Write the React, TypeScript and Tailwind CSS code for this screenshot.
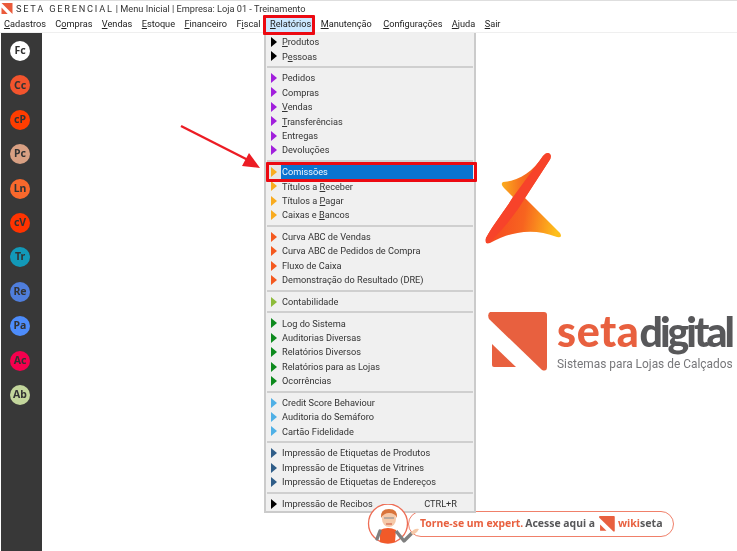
import { Fragment } from "react";

type MenuItem = { label: string; shortcut?: string; active?: boolean };
type MenuGroup = { color: string; items: MenuItem[] };

const topMenu = ["&Cadastros", "C&ompras", "&Vendas", "&Estoque", "&Financeiro", "F&iscal", "&Relatórios", "&Manutenção", "&Configurações", "&Ajuda", "&Sair"];

const shortcuts = [
  { label: "Fc", color: "bg-white" },
  { label: "Cc", color: "bg-[#f2542d]" },
  { label: "cP", color: "bg-[#ff3d00]" },
  { label: "Pc", color: "bg-[#d8a083]" },
  { label: "Ln", color: "bg-[#f9682c]" },
  { label: "cV", color: "bg-[#ff3300]" },
  { label: "Tr", color: "bg-[#1299b8]" },
  { label: "Re", color: "bg-[#4f7edc]" },
  { label: "Pa", color: "bg-[#4d8cfb]" },
  { label: "Ac", color: "bg-[#f5004e]" },
  { label: "Ab", color: "bg-[#c3d69c]" },
];

const menuGroups: MenuGroup[] = [
  { color: "#000000", items: [{ label: "&Produtos" }, { label: "P&essoas" }] },
  {
    color: "#a11fdc",
    items: [{ label: "Pedidos" }, { label: "Compras" }, { label: "&Vendas" }, { label: "&Transferências" }, { label: "Entregas" }, { label: "Devoluções" }],
  },
  {
    color: "#f8ab1f",
    items: [{ label: "Comissões", active: true }, { label: "Títulos a &Receber" }, { label: "Títulos a &Pagar" }, { label: "Caixas e &Bancos" }],
  },
  {
    color: "#f4591f",
    items: [{ label: "Curva ABC de Vendas" }, { label: "Curva ABC de Pedidos de Compra" }, { label: "Fluxo de Caixa" }, { label: "Demonstração do Resultado (DRE)" }],
  },
  { color: "#8dbb3a", items: [{ label: "Contabilidade" }] },
  {
    color: "#0d8a1d",
    items: [{ label: "Log do Sistema" }, { label: "Auditorias Diversas" }, { label: "Relatórios Diversos" }, { label: "Relatórios para as Lojas" }, { label: "Ocorrências" }],
  },
  { color: "#4fb0e6", items: [{ label: "Credit Score Behaviour" }, { label: "Auditoria do Semáforo" }, { label: "Cartão Fidelidade" }] },
  {
    color: "#2f5d88",
    items: [{ label: "Impressão de Etiquetas de Produtos" }, { label: "Impressão de Etiquetas de Vitrines" }, { label: "Impressão de Etiquetas de Endereços" }],
  },
  { color: "#000000", items: [{ label: "Impressão de Recibos", shortcut: "CTRL+R" }] },
];

// "&" marks the letter with the keyboard underline
const Mnemonic = ({ text }: { text: string }) => {
  const i = text.indexOf("&");
  if (i < 0) return <>{text}</>;
  return (
    <>
      {text.slice(0, i)}
      <u>{text[i + 1]}</u>
      {text.slice(i + 2)}
    </>
  );
};

const Caret = ({ color }: { color: string }) => (
  <svg width="6" height="10" viewBox="0 0 6 10" className="shrink-0">
    <polygon points="0,0 6,5 0,10" fill={color} />
  </svg>
);

const Row = ({ item, color }: { item: MenuItem; color: string }) => (
  <div className="flex h-[14.45px] items-center">
    <div className={`flex h-full w-[14px] items-center pl-[4px] ${item.active ? "bg-[#e6e6e6]" : ""}`}>
      <Caret color={color} />
    </div>
    <div className={`flex h-full flex-1 items-center justify-between whitespace-nowrap pl-[1px] pr-[16px] ${item.active ? "bg-[#0a74d0] text-[#f4f8fc]" : "text-[#333333]"}`}>
      <span>
        <Mnemonic text={item.label} />
      </span>
      {item.shortcut && <span>{item.shortcut}</span>}
    </div>
  </div>
);

const ReportsMenu = () => (
  <div className="absolute left-[264px] top-[33px] h-[480px] w-[212px] border-x-2 border-b-2 border-x-[#cbcbcb] border-b-[#cbcbcb] bg-[#f0f0f0] pt-[1.6px] pl-[1px] pr-[1px] text-[9.2px] leading-none">
    {menuGroups.map((group, g) => (
      <Fragment key={g}>
        {g > 0 && (
          <div className="flex h-[7.2px] items-center">
            <div className="h-[2px] w-full bg-[#cfcfcf]" />
          </div>
        )}
        {group.items.map((item) => (
          <Row key={item.label} item={item} color={group.color} />
        ))}
      </Fragment>
    ))}
  </div>
);

const Sidebar = () => (
  <aside className="ml-[1px] flex w-[41px] shrink-0 flex-col items-center gap-[14.4px] bg-[#383838] pt-[8px] pr-[3px] font-['Noto_Sans',sans-serif]">
    {shortcuts.map((s) => (
      <div key={s.label} className={`flex h-[20px] w-[20px] items-center justify-center rounded-full text-[10.5px] font-bold text-[#333333] ${s.color}`}>
        {s.label}
      </div>
    ))}
  </aside>
);

const SetaMark = () => (
  <svg width="90" height="100" viewBox="0 0 90 100">
    <defs>
      <linearGradient id="wingTop" x1="0" y1="0" x2="1" y2="0">
        <stop offset="0" stopColor="#fbae1e" />
        <stop offset="0.35" stopColor="#f7761f" />
        <stop offset="1" stopColor="#f4401f" />
      </linearGradient>
      <linearGradient id="wingBottom" x1="0" y1="0" x2="1" y2="0.1">
        <stop offset="0" stopColor="#f53f24" />
        <stop offset="0.55" stopColor="#f7641f" />
        <stop offset="1" stopColor="#fdbf1c" />
      </linearGradient>
    </defs>
    <path d="M63,8 Q67,3 70,6 Q72,9 69,13 L45,50 L33,49 L24,40 Q20,36 23,34 C38,33 53,24 63,8 Z" fill="url(#wingTop)" />
    <path d="M33,49 C26,61 14,75 6,90 Q4,97 10,95 C26,86 50,78 77,89 Q83,90 80,85 L45,50 Z" fill="url(#wingBottom)" />
    <path d="M63,8 Q67,3 70,6 Q72,9 69,13 L45,50 C38,62 28,76 10,94 Q5,97 6,90 C14,75 26,61 33,49 Z" fill="#f7432a" />
  </svg>
);

const SetaSquare = ({ size, color }: { size: number; color: string }) => (
  <svg width={size} height={size} viewBox="0 0 60 60" className="shrink-0">
    <path d="M2,0 H56 Q59,0 59,3 V55 Q59,60 54,58 L1,7 Q-1,2 2,0 Z" fill={color} />
    <path d="M4,32 L28,55 H6 Q4,55 4,53 Z" fill={color} />
  </svg>
);

const Avatar = () => (
  <svg width="62" height="44" viewBox="0 0 62 44" className="relative z-10 shrink-0">
    <circle cx="21" cy="19.5" r="19.5" fill="#ffffff" stroke="#ee6d55" strokeWidth="1.3" />
    <path d="M13,26 Q21,22 29,26 L28,38 Q21,40.5 13,38 Z" fill="#f15a29" />
    <path d="M13,27 L10,35" stroke="#7f7f7f" strokeWidth="3.4" strokeLinecap="round" />
    <path d="M29,27 L37,37 L45,29" fill="none" stroke="#7f7f7f" strokeWidth="3.4" strokeLinejoin="round" />
    <ellipse cx="22" cy="15" rx="7" ry="8" fill="#f6c9a8" />
    <path d="M14,14 Q13,5 22,5 Q31,5 30,14 Q28,9 22,9 Q17,9 14,14 Z" fill="#d9743b" />
    <path d="M17,14 H27" stroke="#9a9a9a" strokeWidth="1.3" />
    <path d="M19,20 H25" stroke="#c9523c" strokeWidth="1" />
    <path d="M44,29 Q47,24 52,25 L50,28 L46,31 Z" fill="#f6c9a8" />
  </svg>
);

const Annotations = () => (
  <>
    <div className="absolute left-[263px] top-[15px] h-[20px] w-[52px] rounded-[1px] border-[3px] border-[#ec0a12]" />
    <div className="absolute left-[266px] top-[162px] h-[20px] w-[211px] rounded-[1px] border-[3px] border-[#ec0a12]" />
    <svg width="90" height="50" viewBox="0 0 90 50" className="absolute left-[178px] top-[124px]">
      <path d="M3,2 L72,37" stroke="#ec1c24" strokeWidth="2.4" />
      <polygon points="82,44 64,42 71,29" fill="#ec1c24" />
    </svg>
  </>
);

export default function App() {
  return (
    <div className="relative flex h-[551px] w-[737px] flex-col overflow-hidden bg-white font-['Roboto',sans-serif] blur-[0.35px]">
      <div className="h-[1px] bg-[#dedede]" />

      {/* Title bar */}
      <div className="flex h-[15px] items-center whitespace-nowrap text-[9.2px] text-[#333333]">
        <svg width="12" height="11" viewBox="0 0 60 60" className="ml-[1px] mr-[3px] shrink-0">
          <path d="M0,0 H60 V60 Z" fill="#ea5a3a" />
          <path d="M0,24 L34,60 H0 Z" fill="#ea5a3a" />
        </svg>
        <span className="tracking-[1.8px]">SETA GERENCIAL</span>
        <span className="ml-[2px]">| Menu Inicial | Empresa: Loja 01 - Treinamento</span>
      </div>

      {/* Menu bar */}
      <nav className="flex h-[17px] items-center gap-[9.4px] border-b border-[#efefef] pl-[4px] text-[9.2px] text-[#222222]">
        {topMenu.map((m) => (
          <span key={m} className={m === "&Relatórios" ? "-mx-[4px] bg-[#cce8ff] px-[4px] py-[1px]" : m === "&Configurações" ? "ml-[2px]" : ""}>
            <Mnemonic text={m} />
          </span>
        ))}
      </nav>

      <div className="flex min-h-0 flex-1">
        <Sidebar />

        {/* Logos on the desktop */}
        <main className="flex flex-1 flex-col pl-[437px] pt-[115px]">
          <div className="ml-[1px]">
            <SetaMark />
          </div>
          <div className="mt-[64px] flex gap-[9px] pl-[9px]">
            <SetaSquare size={60} color="#e8603f" />
            <div className="flex flex-col">
              <div className="flex h-[44px] items-baseline font-black leading-[38px] font-['Lato',sans-serif]">
                <span className="text-[43px] tracking-[0.6px] text-[#e8603f]">seta</span>
                <span className="text-[41px] tracking-[-3px] text-[#58585a]">digital</span>
              </div>
              <div className="whitespace-nowrap text-[11.9px] leading-[16px] text-[#77777a]">Sistemas para Lojas de Calçados</div>
            </div>
          </div>
        </main>
      </div>

      {/* Wiki banner */}
      <div className="absolute left-[367px] top-[504px] flex items-start">
        <Avatar />
        <div className="-ml-[21px] mt-[7px] flex h-[26px] w-[266px] items-center rounded-full border-[1.5px] border-[#f0806a] bg-white pl-[11px] text-[10.4px] font-bold font-['Noto_Sans',sans-serif]">
          <span className="whitespace-nowrap text-[#e8603f]">Torne-se um expert.</span>
          <span className="ml-[2px] whitespace-nowrap text-[#58585a]">Acesse aqui a</span>
          <span className="ml-[4px]">
            <SetaSquare size={16} color="#e8603f" />
          </span>
          <span className="ml-[3px] whitespace-nowrap text-[10.6px]">
            <span className="text-[#e8603f]">wiki</span>
            <span className="text-[#58585a]">seta</span>
          </span>
        </div>
      </div>

      <ReportsMenu />
      <Annotations />
    </div>
  );
}
